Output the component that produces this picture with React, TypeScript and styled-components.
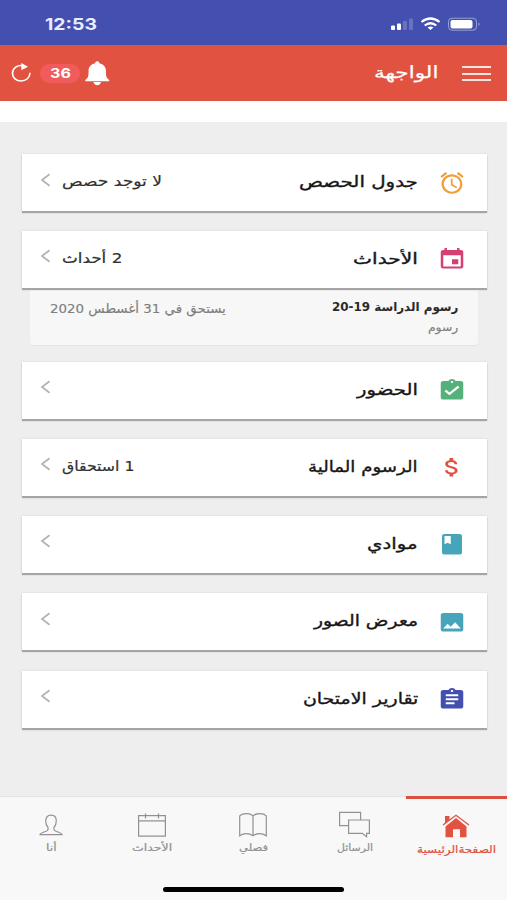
import React, { useLayoutEffect, useRef, useState } from "react";
import styled, { createGlobalStyle } from "styled-components";
import type { IconType } from "react-icons";
import {
  MdAlarm,
  MdAssignment,
  MdAssignmentTurnedIn,
  MdAttachMoney,
  MdClass,
  MdEvent,
  MdImage,
} from "react-icons/md";

const GlobalStyle = createGlobalStyle`
  * { box-sizing: border-box; }
  body {
    margin: 0;
    background: #eeeeee;
    font-family: "DejaVu Sans", "Noto Sans", sans-serif;
  }
`;

const Screen = styled.div`
  width: 507px;
  height: 900px;
  display: flex;
  flex-direction: column;
  overflow: hidden;
  background: #eeeeee;
`;

/* ---------- text that fills a given width ---------- */

type LabelProps = {
  $w: number;
  $size: number;
  $color?: string;
  $bold?: boolean;
  $font?: string;
  $shift?: number;
  $stroke?: number;
};

const LabelBox = styled.span<LabelProps>`
  display: block;
  flex: none;
  width: ${(p) => p.$w}px;
  margin-top: ${(p) => p.$shift ?? 0}px;
  font-size: ${(p) => p.$size}px;
  line-height: 20px;
  font-weight: ${(p) => (p.$bold ? 700 : 400)};
  font-family: ${(p) => p.$font ?? "inherit"};
  color: ${(p) => p.$color ?? "#1c1c1c"};
  -webkit-text-stroke: ${(p) => p.$stroke ?? 0}px currentColor;
`;

const LabelText = styled.span`
  display: inline-block;
  white-space: nowrap;
  transform-origin: 100% 50%;
`;

function Label({ children, ...box }: LabelProps & { children: string }) {
  const ref = useRef<HTMLSpanElement>(null);
  const [scale, setScale] = useState(1);
  useLayoutEffect(() => {
    if (ref.current) setScale(box.$w / ref.current.offsetWidth);
  }, [box.$w, children]);
  return (
    <LabelBox {...box} dir="rtl">
      <LabelText ref={ref} style={{ transform: `scaleX(${scale})` }}>
        {children}
      </LabelText>
    </LabelBox>
  );
}

/* ---------- status bar ---------- */

const StatusBar = styled.div`
  flex: none;
  height: 45px;
  padding: 2px 26px 0 45px;
  display: flex;
  align-items: center;
  justify-content: space-between;
  background: #4350af;
`;

const StatusIcons = styled.svg`
  display: block;
  width: 92px;
  height: 14px;
`;

/* ---------- header ---------- */

const Header = styled.header`
  flex: none;
  height: 56px;
  padding: 0 16px 0 11px;
  display: flex;
  align-items: center;
  justify-content: space-between;
  background: #e25241;
`;

const HeaderGroup = styled.div<{ $gap: number }>`
  display: flex;
  align-items: center;
  gap: ${(p) => p.$gap}px;
`;

const Drawing = styled.svg<{ $w: number; $h: number; $color?: string }>`
  display: block;
  flex: none;
  width: ${(p) => p.$w}px;
  height: ${(p) => p.$h}px;
  color: ${(p) => p.$color ?? "#fff"};
  overflow: visible;
`;

const Badge = styled.span`
  width: 40px;
  height: 19px;
  display: flex;
  align-items: center;
  justify-content: center;
  border-radius: 10px;
  background: #f15b5b;
`;

const Burger = styled.span`
  width: 29px;
  height: 15px;
  margin-top: 1px;
  display: flex;
  flex-direction: column;
  justify-content: space-between;
`;

const BurgerLine = styled.span`
  height: 2px;
  background: #fbe3e0;
`;

const Strip = styled.div`
  flex: none;
  height: 20.5px;
  background: #fff;
`;

/* ---------- list ---------- */

const List = styled.main`
  flex: 1;
  padding: 32.5px 20px 0 22px;
`;

const Card = styled.div<{ $gap: number }>`
  height: 57px;
  margin-bottom: ${(p) => p.$gap}px;
  padding: 0 20px 2px 17px;
  display: flex;
  align-items: center;
  background: #fff;
  box-shadow: 0 2px 1px #a5a5a5, 0 0 2px #d5d5d5;
  position: relative;
`;

const Spacer = styled.span`
  flex: 1;
`;

const ChevronBox = styled.span`
  width: 23px;
  margin-top: -4px;
  flex: none;
`;

const IconSlot = styled.span<{ $w: number; $h: number; $color: string }>`
  width: 30px;
  margin-left: 19px;
  margin-top: 3px;
  flex: none;
  display: flex;
  justify-content: center;
  color: ${(p) => p.$color};
  svg {
    display: block;
    flex: none;
    width: ${(p) => p.$w}px;
    height: ${(p) => p.$h}px;
  }
`;

const Detail = styled.div`
  height: 55px;
  margin: 0 9px 17px 8px;
  padding: 7px 20px 0 20px;
  display: flex;
  justify-content: space-between;
  background: #f7f7f7;
  border-radius: 0 0 3px 3px;
  box-shadow: 0 1px 1px #e2e2e2;
`;

const DetailColumn = styled.div`
  display: flex;
  flex-direction: column;
  align-items: flex-end;
`;

type Row = {
  title: string;
  w: number;
  icon: IconType;
  iw?: number;
  ih?: number;
  color: string;
  note?: string;
  noteW?: number;
  gap: number;
};

const rows: Row[] = [
  { title: "جدول الحصص", w: 119, icon: MdAlarm, iw: 28, ih: 26, color: "#f19d38", note: "لا توجد حصص", noteW: 100, gap: 19.5 },
  { title: "الأحداث", w: 65, icon: MdEvent, color: "#d63f70", note: "2 أحداث", noteW: 60, gap: 2 },
  { title: "الحضور", w: 61, icon: MdAssignmentTurnedIn, color: "#56b07b", gap: 20 },
  { title: "الرسوم المالية", w: 110, icon: MdAttachMoney, color: "#e25241", note: "1 استحقاق", noteW: 72, gap: 20 },
  { title: "موادي", w: 51, icon: MdClass, color: "#46a5ba", gap: 20.5 },
  { title: "معرض الصور", w: 104, icon: MdImage, color: "#46a5ba", gap: 20.5 },
  { title: "تقارير الامتحان", w: 115, icon: MdAssignment, color: "#4350af", gap: 0 },
];

function MenuCard({ row }: { row: Row }) {
  const Icon = row.icon;
  return (
    <Card $gap={row.gap}>
      <ChevronBox>
        <Drawing $w={12} $h={12} $color="#b2b2b2" viewBox="0 0 12 12">
          <path d="M10.500.3 3 6l7.500 5.700" fill="none" stroke="currentColor" strokeWidth="1.7" />
        </Drawing>
      </ChevronBox>
      {row.note && (
        <Label $w={row.noteW ?? 60} $size={14} $color="#303030" $shift={-1} $stroke={0.2}>
          {row.note}
        </Label>
      )}
      <Spacer />
      <Label $w={row.w} $size={15.5} $color="#161616" $shift={1.5} $stroke={0.35}>
        {row.title}
      </Label>
      <IconSlot $w={row.iw ?? 30} $h={row.ih ?? 24.5} $color={row.color}>
        <Icon preserveAspectRatio="none" />
      </IconSlot>
    </Card>
  );
}

/* ---------- tab bar ---------- */

const TabBar = styled.nav`
  flex: none;
  height: 104.5px;
  display: flex;
  flex-direction: column;
  align-items: center;
  justify-content: space-between;
  padding-bottom: 8px;
  background: #f8f8f8;
  border-top: 1px solid #e2e2e2;
`;

const Tabs = styled.div`
  width: 100%;
  display: grid;
  grid-template-columns: repeat(5, 1fr);
  margin-top: -1px;
`;

const Tab = styled.div<{ $active?: boolean }>`
  height: 66px;
  padding-top: 13px;
  display: flex;
  flex-direction: column;
  align-items: center;
  border-top: 3px solid ${(p) => (p.$active ? "#d9503f" : "transparent")};
`;

const HomeIndicator = styled.div`
  width: 181px;
  height: 5px;
  border-radius: 3px;
  background: #000;
`;

const GREY = "#929292";

export default function App() {
  return (
    <>
      <GlobalStyle />
      <Screen>
        <StatusBar>
          <Label $w={52} $size={16} $bold $color="#e9edff" $font='"Inter", sans-serif'>12:53</Label>
          <StatusIcons viewBox="0 0 92 14">
            <g fill="#fff">
              <rect x="2" y="8.5" width="4" height="4.5" rx="1" />
              <rect x="8" y="6.5" width="4" height="6.5" rx="1" />
              <rect x="14" y="4" width="4" height="9" rx="1" opacity=".2" />
              <rect x="20" y="1.5" width="4" height="11.5" rx="1" opacity=".2" />
              <path d="m41.500 13-3-2.500q3-2 6 0z" />
              <rect x="61.500" y="3" width="22" height="8.500" rx="2" />
              <path d="M89.500 5.500q2 1.700 0 3.400z" opacity=".6" />
            </g>
            <g fill="none" stroke="#fff" strokeWidth="2.200">
              <path d="M32.500 5q9-7 18 0" />
              <path d="M35.700 8.500q5.800-4.500 11.600 0" />
            </g>
            <rect x="59.500" y="1.200" width="28" height="12" rx="3.500" fill="none" stroke="#fff" opacity=".45" />
          </StatusIcons>
        </StatusBar>

        <Header>
          <HeaderGroup $gap={5}>
            <HeaderGroup $gap={9}>
              <Drawing $w={20} $h={20} viewBox="0 0 20 20">
                <path d="M12.500 2.800C6.500 1.500 1.500 5 1.500 10.300c0 4.500 3.800 7.700 8.500 7.700 5 0 9-3.300 9-8.200" fill="none" stroke="currentColor" strokeWidth="1.600" />
                <path d="M10.300 0 17 3.800l-6.700 3.500z" fill="currentColor" />
              </Drawing>
              <Badge>
                <Label $w={21} $size={13} $bold $color="#fff" $font='"Inter", sans-serif'>36</Label>
              </Badge>
            </HeaderGroup>
            <Drawing $w={24.5} $h={24.5} viewBox="0 0 26 25" preserveAspectRatio="none">
              <path
                d="M13 .3c1.500 0 2.200.8 2.200 2 4.500.9 7 3.700 7 7.700 0 6 .6 7.500 3.500 9.500v1.200H.3v-1.200c2.900-2 3.500-3.500 3.500-9.500 0-4 2.500-6.800 7-7.700 0-1.200.7-2 2.200-2zM9 21.500h8c-.3 1.800-2 3.200-4 3.200s-3.700-1.400-4-3.200z"
                fill="currentColor"
              />
            </Drawing>
          </HeaderGroup>
          <HeaderGroup $gap={24}>
            <Label $w={64} $size={16.5} $color="#fff" $shift={-1} $stroke={0.25}>الواجهة</Label>
            <Burger>
              <BurgerLine />
              <BurgerLine />
              <BurgerLine />
            </Burger>
          </HeaderGroup>
        </Header>
        <Strip />

        <List>
          {rows.slice(0, 2).map((row) => (
            <MenuCard key={row.title} row={row} />
          ))}
          <Detail>
            <Label $w={176} $size={13} $color="#7e7e7e" $shift={2} $stroke={0.15}>يستحق في 31 أغسطس 2020</Label>
            <DetailColumn>
              <Label $w={126} $size={12} $bold $color="#2a2a2a">رسوم الدراسة 19-20</Label>
              <Label $w={30} $size={11.5} $color="#7e7e7e" $stroke={0.15}>رسوم</Label>
            </DetailColumn>
          </Detail>
          {rows.slice(2).map((row) => (
            <MenuCard key={row.title} row={row} />
          ))}
        </List>

        <TabBar>
          <Tabs>
            <Tab>
              <Drawing $w={24} $h={26} $color={GREY} viewBox="0 0 24 26">
                <path
                  d="M12 3.200c3.500 0 5.300 2.200 5.300 5.800 0 2.700-.9 4.900-2.300 6.500-.6 2.500 0 3.300 2.500 4 3.500 1 5 1.500 5.500 3.200H1c.5-1.700 2-2.200 5.500-3.200 2.500-.7 3.100-1.500 2.500-4-1.400-1.600-2.300-3.800-2.300-6.500 0-3.600 1.800-5.800 5.300-5.800z"
                  fill="none" stroke="currentColor" strokeWidth="1.200"
                />
              </Drawing>
              <Label $w={11} $size={10} $color={GREY} $stroke={0.2}>أنا</Label>
            </Tab>
            <Tab>
              <Drawing $w={28} $h={26} $color={GREY} viewBox="0 0 28 26">
                <path d="M.6 3.700h26.800v20.500H.6zM.6 8.800h26.800M7.500 1.500v5M20.500 1.500v5" fill="none" stroke="currentColor" strokeWidth="1.200" />
              </Drawing>
              <Label $w={40} $size={10} $color={GREY} $stroke={0.2}>الأحداث</Label>
            </Tab>
            <Tab>
              <Drawing $w={28} $h={26} $color={GREY} viewBox="0 0 28 26">
                <path d="M14 3.800C11 .8 3.500.8.7 3.800v20c4-3 9.500-3 13.300 0 3.800-3 9.300-3 13.300 0v-20c-2.800-3-10.300-3-13.300 0zv20" fill="none" stroke="currentColor" strokeWidth="1.200" />
              </Drawing>
              <Label $w={29} $size={10} $color={GREY} $stroke={0.2}>فصلي</Label>
            </Tab>
            <Tab>
              <Drawing $w={31} $h={26} $color={GREY} viewBox="0 0 31 26">
                <path d="M9.600 13.700H.6V.4h21V8" fill="none" stroke="currentColor" strokeWidth="1.200" />
                <path d="M9.600 8h20.800v13.300h-2.800v3.400l-4.400-3.400H9.600z" fill="none" stroke="currentColor" strokeWidth="1.200" />
              </Drawing>
              <Label $w={36} $size={10} $color={GREY} $stroke={0.2}>الرسائل</Label>
            </Tab>
            <Tab $active>
              <Drawing $w={28} $h={26} $color="#e25241" viewBox="0 0 28 26">
                <path d="M3 4h4.500v3.700L3 11.500z M14 6l10.500 8.500v10.700H18v-8h-7v8H3.500V14.500z" fill="currentColor" />
                <path d="m1 12.900 13-9.700 13 9.700" fill="none" stroke="currentColor" strokeWidth="1.300" />
              </Drawing>
              <Label $w={79} $size={10.5} $color="#e25241" $shift={1} $stroke={0.2}>الصفحةالرئيسية</Label>
            </Tab>
          </Tabs>
          <HomeIndicator />
        </TabBar>
      </Screen>
    </>
  );
}
